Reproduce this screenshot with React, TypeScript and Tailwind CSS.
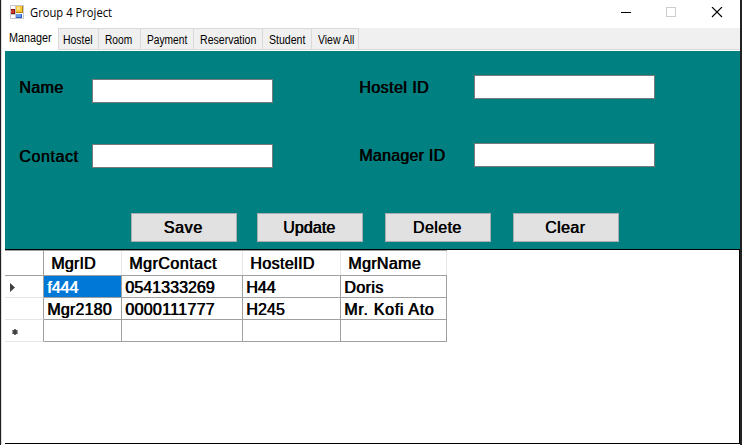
import type { ReactNode } from "react";

const bold = "text-[16px] leading-[18px] whitespace-pre [text-shadow:0.7px_0_0_currentColor]";

function Tab({ label, box, text }: { label: string; box: string; text: string }) {
  return (
    <div className={`h-[21px] shrink-0 border-r border-t border-[#d9d9d9] bg-[#f0f0f0] pt-[4px] ${box}`}>
      <span className={`block w-max origin-left whitespace-pre text-[12px] leading-[14px] ${text}`}>{label}</span>
    </div>
  );
}

function Label({ children, className }: { children: ReactNode; className: string }) {
  return <label className={`shrink-0 ${bold} ${className}`}>{children}</label>;
}

function Input({ className }: { className: string }) {
  return <input className={`h-6 w-[181px] shrink-0 border border-[#7a7a7a] bg-white outline-none ${className}`} />;
}

function Button({ children, className = "", text }: { children: string; className?: string; text: string }) {
  return (
    <button
      className={`flex h-[29px] w-[106px] justify-center border border-[#adadad] bg-[#e1e1e1] pr-[2px] pt-[5px] ${className}`}
    >
      <span className={`${bold} ${text}`}>{children}</span>
    </button>
  );
}

function Head({ children, className }: { children: string; className: string }) {
  return (
    <div className="h-[25px] border-b border-[#a0a0a0] pl-[7px] pt-[4px] shadow-[inset_-1px_0_0_#e5e5e5]">
      <span className={`block ${bold} ${className}`}>{children}</span>
    </div>
  );
}

function Cell({ children, className = "" }: { children?: string; className?: string }) {
  return (
    <div className={`h-[22px] border-b border-r border-[#a0a0a0] pl-[3px] pt-[3px] ${bold} ${className}`}>
      {children}
    </div>
  );
}

function RowHead({ children }: { children: ReactNode }) {
  return (
    <div className="h-[22px] border-b border-r border-b-[#e5e5e5] border-r-[#a0a0a0]">{children}</div>
  );
}

export default function App() {
  return (
    <div className="flex h-[445px] w-[742px] overflow-hidden bg-white font-['Liberation_Sans',Arial,sans-serif] text-black">
      <div className="w-px shrink-0 bg-[#1f1f24]" />
      <div className="w-px shrink-0 bg-[#dcdcdc]" />
      <div className="flex w-[738px] shrink-0 flex-col">
        <header className="flex h-7 shrink-0 items-start">
          <svg className="ml-2 mt-[5px] shrink-0" width="14" height="14" shapeRendering="crispEdges">
            <rect x="0.5" y="0.5" width="13" height="13" fill="#fff" stroke="#c4c8cf" />
            <path d="M5.5 1V13M1 9.5H5" stroke="#c4c8cf" />
            <rect x="6" y="1" width="7" height="7" fill="#b98408" />
            <rect x="6" y="1" width="6" height="6" fill="#f9c93c" />
            <rect x="7" y="2" width="3" height="3" fill="#fde28a" />
            <rect x="1" y="4" width="4" height="5" fill="#8f1511" />
            <rect x="1" y="5" width="3" height="3" fill="#cf3a2e" />
            <rect x="6" y="9" width="6" height="4" fill="#2a5fc4" />
            <rect x="6" y="9" width="5" height="3" fill="#6c9ae6" />
          </svg>
          <h1 className="ml-[6px] mt-[5px] w-[560px] origin-left scale-x-[0.935] whitespace-pre font-['Open_Sans','Noto_Sans',sans-serif] text-[12px] leading-4">
            Group 4 Project
          </h1>
          <svg className="ml-[31px] mt-[7px] shrink-0" width="102" height="11" shapeRendering="crispEdges">
            <path d="M0 5.5H10" stroke="#000" />
            <rect x="45.5" y="0.5" width="9" height="9" fill="none" stroke="#cccccc" />
            <path d="M91 0L101 10M101 0L91 10" stroke="#000" strokeWidth="1.1" shapeRendering="auto" />
          </svg>
        </header>
        <nav className="flex h-[22px] shrink-0 border-b border-[#d9d9d9] bg-[#f0f0f0]">
          <div className="h-[22px] w-[57px] shrink-0 border-r border-[#d9d9d9] bg-white pl-[7px] pt-[3px]">
            <span className="block w-max origin-left scale-x-[0.9] text-[12px] leading-[14px]">Manager</span>
          </div>
          <Tab label="Hostel" box="w-[40px] pl-1" text="scale-x-[0.87]" />
          <Tab label="Room" box="w-[42px] pl-[6px]" text="scale-x-[0.85]" />
          <Tab label="Payment" box="w-[53px] pl-[6px]" text="scale-x-[0.85]" />
          <Tab label="Reservation" box="w-[69px] pl-[6px]" text="scale-x-[0.88]" />
          <Tab label="Student" box="w-[49px] pl-[6px]" text="scale-x-[0.88]" />
          <Tab label="View All" box="w-[47px] pl-[6px]" text="scale-x-[0.87]" />
        </nav>
        <main className="ml-[3px] mt-px flex w-[735px] grow flex-col">
          <section className="h-[198px] shrink-0 bg-[#008080]">
            <div className="flex h-[92px] items-start">
              <Label className="ml-[14px] mt-[28px] w-[73px] tracking-[0.4px]">Name</Label>
              <Input className="mt-[28px]" />
              <Label className="ml-[86px] mt-[28px] w-[115px] tracking-[0.45px]">Hostel ID</Label>
              <Input className="mt-[24px]" />
            </div>
            <div className="flex h-[70px] items-start">
              <Label className="ml-[14px] mt-[5px] w-[73px] tracking-[0.6px]">Contact</Label>
              <Input className="mt-px" />
              <Label className="ml-[86px] mt-[4px] w-[115px] tracking-[0.25px]">Manager ID</Label>
              <Input className="" />
            </div>
            <div className="ml-[126px] flex gap-[22px]">
              <Button className="-mr-0.5" text="tracking-[0.6px]">Save</Button>
              <Button text="tracking-[0.1px]">Update</Button>
              <Button text="tracking-[0.4px]">Delete</Button>
              <Button text="tracking-[0.4px]">Clear</Button>
            </div>
          </section>
          <section className="h-[195px] w-[735px] shrink-0 border-y border-r border-black">
            <div className="grid w-[442px] grid-cols-[39px_78px_121px_98px_106px] border-t border-[#a0a0a0]">
              <div className="h-[25px] border-b border-r border-b-[#a0a0a0] border-r-[#a0a0a0]" />
              <Head className="tracking-[0.2px]">MgrID</Head>
              <Head className="tracking-[0.5px]">MgrContact</Head>
              <Head className="tracking-[0.4px]">HostelID</Head>
              <Head className="tracking-[0.35px]">MgrName</Head>

              <RowHead>
                <svg width="20" height="21"><path d="M5 7L10 11.5L5 16Z" fill="#404040" /></svg>
              </RowHead>
              <Cell className="bg-[#0078d7] text-white">f444</Cell>
              <Cell className="tracking-[0.05px]">0541333269</Cell>
              <Cell>H44</Cell>
              <Cell className="tracking-[0.4px]">Doris</Cell>

              <RowHead>{null}</RowHead>
              <Cell className="tracking-[0.2px]">Mgr2180</Cell>
              <Cell className="tracking-[0.3px]">0000111777</Cell>
              <Cell className="tracking-[0.1px]">H245</Cell>
              <Cell className="tracking-[0.7px]">Mr. Kofi Ato</Cell>

              <RowHead>
                <svg width="20" height="21">
                  <path d="M10 9V15M7.4 10.5L12.6 13.5M12.6 10.5L7.4 13.5" stroke="#404040" strokeWidth="1.5" />
                </svg>
              </RowHead>
              <Cell />
              <Cell />
              <Cell />
              <Cell />
            </div>
          </section>
        </main>
      </div>
      <div className="w-[2px] shrink-0 bg-[#222222]" />
    </div>
  );
}
